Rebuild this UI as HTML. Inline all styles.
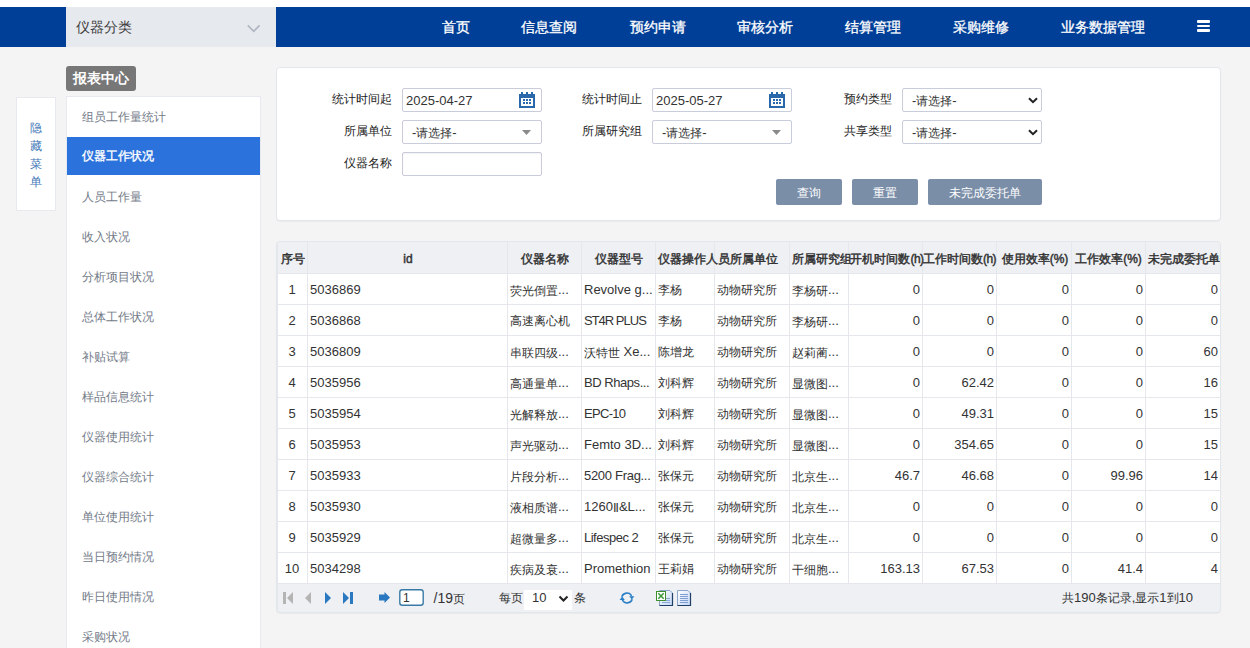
<!DOCTYPE html>
<html><head><meta charset="utf-8">
<style>
*{box-sizing:border-box;margin:0;padding:0}
html,body{width:1250px;height:648px;overflow:hidden}
body{background:#f4f4f4;font-family:"Liberation Sans",sans-serif;font-size:12px;color:#333;position:relative}
.abs{position:absolute}
#topw{left:0;top:0;width:1250px;height:7px;background:#fff}
#nav{left:0;top:7px;width:1250px;height:40px;background:#003f98}
#cat{left:66px;top:7px;width:210px;height:40px;background:#e6e9ee;color:#3c3c3c;font-size:14px;line-height:40px;padding-left:10px}
#cat .chev{position:absolute;left:181px;top:15px;width:14px;height:12px}
.navi{position:absolute;top:7px;height:40px;line-height:40px;color:#fff;font-size:14px;white-space:nowrap;-webkit-text-stroke:0.3px #fff}
#hamb{left:1197px;top:20px;width:13px;height:12px}
#hamb i{position:absolute;left:0;width:13px;background:#fff;border-radius:1px}
#badge{left:66px;top:66px;width:70px;height:25px;background:#777;border-radius:3px;color:#fff;font-weight:bold;font-size:14px;line-height:25px;padding-left:7px}
#hide{left:16px;top:97px;width:40px;height:114px;background:#fff;border:1px solid #e6e9ee;color:#4277b8;font-size:12px;text-align:center;padding-top:21px;padding-right:1px;line-height:18px}
#menu{left:66px;top:96px;width:195px;height:560px;background:#fff;border:1px solid #e6e9ef}
.mi{position:absolute;left:0;width:193px;height:40px;line-height:40px;padding-left:14.7px;color:#737b88;font-size:12px}
.mi.act{background:#2b72dc;color:#fff;height:38px;line-height:38px;-webkit-text-stroke:0.35px #fff}
.panel{background:#fff;border:1px solid #e2e7ec;border-radius:4px}
#form{left:276px;top:67px;width:945px;height:154px;box-shadow:0 1px 1px rgba(0,0,0,.04)}
.lbl{position:absolute;font-size:12px;color:#222;text-align:right;width:80px;line-height:23px}
.inp{position:absolute;width:140px;height:24px;border:1px solid #c9ccda;border-radius:2px;background:#fff;font-size:13px;line-height:24px;padding-left:3px;color:#333}
.sel{font-size:12px}
.btn{position:absolute;top:179px;height:26px;background:#7b8ea8;border-radius:2px;color:#fff;font-size:12px;line-height:28px;text-align:center}
#tbl{left:276px;top:241px;width:945px;height:372px;box-shadow:0 1px 1px rgba(0,0,0,.04);overflow:hidden;border-radius:4px;border:1px solid #e2e7ec;background:#eef0f3}
.th{position:absolute;top:0;height:31px;line-height:35px;font-weight:normal;-webkit-text-stroke:0.45px #333;font-size:12px;color:#333;white-space:nowrap}
.td{position:absolute;height:30px;line-height:33px;font-size:12px;color:#333;white-space:nowrap}
.n{font-size:13px}
.hp{letter-spacing:-0.5px}
.nl{position:relative;top:-1px}
.td.nn{line-height:31px}
.pp{letter-spacing:0}
.pt{position:absolute;height:29px;line-height:28px;font-size:12px;color:#333;white-space:nowrap}
</style></head><body>
<div class="abs" id="topw"></div>
<div class="abs" id="nav"></div>
<div class="abs" id="cat">仪器分类<svg class="chev" width="14" height="12" viewBox="0 0 14 12"><path d="M0.8 3.4L6.7 9.3L12.6 3.4" fill="none" stroke="#b1b8c3" stroke-width="1.7"/></svg></div>
<div class="navi" style="left:441.6px">首页</div>
<div class="navi" style="left:521px">信息查阅</div>
<div class="navi" style="left:630px">预约申请</div>
<div class="navi" style="left:737.3px">审核分析</div>
<div class="navi" style="left:845px">结算管理</div>
<div class="navi" style="left:952.6px">采购维修</div>
<div class="navi" style="left:1061.3px">业务数据管理</div>
<div class="abs" id="hamb"><i style="top:0;height:3px"></i><i style="top:5px;height:2px"></i><i style="top:9px;height:3px"></i></div>

<div class="abs" id="badge">报表中心</div>
<div class="abs" id="hide">隐<br>藏<br>菜<br>单</div>
<div class="abs" id="menu">
<div class="mi" style="top:0">组员工作量统计</div>
<div class="mi act" style="top:40px">仪器工作状况</div>
<div class="mi" style="top:80px">人员工作量</div>
<div class="mi" style="top:120px">收入状况</div>
<div class="mi" style="top:160px">分析项目状况</div>
<div class="mi" style="top:200px">总体工作状况</div>
<div class="mi" style="top:240px">补贴试算</div>
<div class="mi" style="top:280px">样品信息统计</div>
<div class="mi" style="top:320px">仪器使用统计</div>
<div class="mi" style="top:360px">仪器综合统计</div>
<div class="mi" style="top:400px">单位使用统计</div>
<div class="mi" style="top:440px">当日预约情况</div>
<div class="mi" style="top:480px">昨日使用情况</div>
<div class="mi" style="top:520px">采购状况</div>
</div>

<div class="abs panel" id="form"></div>
<div class="lbl" style="left:312px;top:88px">统计时间起</div>
<div class="inp" style="left:402px;top:88px">2025-04-27<svg class="cal" style="position:absolute;left:116px;top:3px" width="16" height="16" viewBox="0 0 16 16"><g fill="#2a68ac"><rect x="0" y="2" width="16" height="14"/><rect x="2" y="0" width="2" height="3"/><rect x="12" y="0" width="2" height="3"/><rect x="7" y="0" width="2" height="3"/></g><rect x="2" y="6" width="12" height="8" fill="#fff"/><g fill="#2a68ac"><rect x="4" y="7" width="2" height="2"/><rect x="7" y="7" width="2" height="2"/><rect x="10" y="7" width="2" height="2"/><rect x="4" y="10" width="2" height="2"/><rect x="7" y="10" width="2" height="2"/><rect x="10" y="10" width="2" height="2"/></g></svg></div>
<div class="lbl" style="left:312px;top:120px">所属单位</div>
<div class="inp sel" style="left:402px;top:120px;padding-left:9px"><span class="n">-</span>请选择<span class="n">-</span><svg style="position:absolute;left:119px;top:9px" width="9" height="5" viewBox="0 0 9 5"><path d="M0 0H9L4.5 5Z" fill="#8a8a8a"/></svg></div>
<div class="lbl" style="left:312px;top:152px">仪器名称</div>
<div class="inp" style="left:402px;top:152px;box-shadow:inset 0 1px 2px rgba(0,0,0,.06)"></div>

<div class="lbl" style="left:562px;top:88px">统计时间止</div>
<div class="inp" style="left:652px;top:88px">2025-05-27<svg class="cal" style="position:absolute;left:116px;top:3px" width="16" height="16" viewBox="0 0 16 16"><g fill="#2a68ac"><rect x="0" y="2" width="16" height="14"/><rect x="2" y="0" width="2" height="3"/><rect x="12" y="0" width="2" height="3"/><rect x="7" y="0" width="2" height="3"/></g><rect x="2" y="6" width="12" height="8" fill="#fff"/><g fill="#2a68ac"><rect x="4" y="7" width="2" height="2"/><rect x="7" y="7" width="2" height="2"/><rect x="10" y="7" width="2" height="2"/><rect x="4" y="10" width="2" height="2"/><rect x="7" y="10" width="2" height="2"/><rect x="10" y="10" width="2" height="2"/></g></svg></div>
<div class="lbl" style="left:562px;top:120px">所属研究组</div>
<div class="inp sel" style="left:652px;top:120px;padding-left:9px"><span class="n">-</span>请选择<span class="n">-</span><svg style="position:absolute;left:119px;top:9px" width="9" height="5" viewBox="0 0 9 5"><path d="M0 0H9L4.5 5Z" fill="#8a8a8a"/></svg></div>

<div class="lbl" style="left:812px;top:88px">预约类型</div>
<div class="inp sel" style="left:902px;top:88px;padding-left:9px"><span class="n">-</span>请选择<span class="n">-</span><svg style="position:absolute;left:125px;top:8px" width="10" height="7" viewBox="0 0 10 7"><path d="M1 1.2L5 5.2L9 1.2" fill="none" stroke="#222" stroke-width="2"/></svg></div>
<div class="lbl" style="left:812px;top:120px">共享类型</div>
<div class="inp sel" style="left:902px;top:120px;padding-left:9px"><span class="n">-</span>请选择<span class="n">-</span><svg style="position:absolute;left:125px;top:8px" width="10" height="7" viewBox="0 0 10 7"><path d="M1 1.2L5 5.2L9 1.2" fill="none" stroke="#222" stroke-width="2"/></svg></div>

<div class="btn" style="left:776px;width:66px">查询</div>
<div class="btn" style="left:852px;width:66px">重置</div>
<div class="btn" style="left:928px;width:114px">未完成委托单</div>


<div class="abs" id="tbl">
<div class="abs" style="left:0;top:0;width:944px;height:31px;background:#eef0f4"></div>
<div class="abs" style="left:0;top:32px;width:944px;height:310px;background:#fff"></div>
<div class="abs" style="left:0;top:31px;width:944px;height:1px;background:#e4e7ec"></div>
<div class="abs" style="left:0;top:0;width:1px;height:371px;background:#e4e7ec"></div>
<div class="abs" style="left:0;top:62px;width:944px;height:1px;background:#e4e7ec"></div>
<div class="abs" style="left:0;top:93px;width:944px;height:1px;background:#e4e7ec"></div>
<div class="abs" style="left:0;top:124px;width:944px;height:1px;background:#e4e7ec"></div>
<div class="abs" style="left:0;top:155px;width:944px;height:1px;background:#e4e7ec"></div>
<div class="abs" style="left:0;top:186px;width:944px;height:1px;background:#e4e7ec"></div>
<div class="abs" style="left:0;top:217px;width:944px;height:1px;background:#e4e7ec"></div>
<div class="abs" style="left:0;top:248px;width:944px;height:1px;background:#e4e7ec"></div>
<div class="abs" style="left:0;top:279px;width:944px;height:1px;background:#e4e7ec"></div>
<div class="abs" style="left:0;top:310px;width:944px;height:1px;background:#e4e7ec"></div>
<div class="abs" style="left:0;top:341px;width:944px;height:1px;background:#e4e7ec"></div>
<div class="abs" style="left:30px;top:0;width:1px;height:342px;background:#e4e7ec"></div>
<div class="abs" style="left:230px;top:0;width:1px;height:342px;background:#e4e7ec"></div>
<div class="abs" style="left:304px;top:0;width:1px;height:342px;background:#e4e7ec"></div>
<div class="abs" style="left:378px;top:0;width:1px;height:342px;background:#e4e7ec"></div>
<div class="abs" style="left:437px;top:0;width:1px;height:342px;background:#e4e7ec"></div>
<div class="abs" style="left:512px;top:0;width:1px;height:342px;background:#e4e7ec"></div>
<div class="abs" style="left:571px;top:0;width:1px;height:342px;background:#e4e7ec"></div>
<div class="abs" style="left:645px;top:0;width:1px;height:342px;background:#e4e7ec"></div>
<div class="abs" style="left:719px;top:0;width:1px;height:342px;background:#e4e7ec"></div>
<div class="abs" style="left:794px;top:0;width:1px;height:342px;background:#e4e7ec"></div>
<div class="abs" style="left:868px;top:0;width:1px;height:342px;background:#e4e7ec"></div>
<div class="th" style="left:4px">序号</div>
<div class="th" style="left:31px;width:200px;text-align:center">id</div>
<div class="th" style="left:168px;width:200px;text-align:center">仪器名称</div>
<div class="th" style="left:242px;width:200px;text-align:center">仪器型号</div>
<div class="th" style="left:381px">仪器操作人员所属单位</div>
<div class="th" style="left:515px">所属研究组</div>
<div class="th" style="left:510px;width:200px;text-align:center">开机时间数<span class="hp">(h)</span></div>
<div class="th" style="left:582.5px;width:200px;text-align:center">工作时间数<span class="hp">(h)</span></div>
<div class="th" style="left:658px;width:200px;text-align:center">使用效率<span class="pp">(%)</span></div>
<div class="th" style="left:731.5px;width:200px;text-align:center">工作效率<span class="pp">(%)</span></div>
<div class="th" style="left:871px">未完成委托单数</div>
<div class="td n nn" style="left:0px;top:32px;width:30px;text-align:center">1</div>
<div class="td" style="left:33px;top:32px"><span class="n nl">5036869</span></div>
<div class="td" style="left:233px;top:32px">荧光倒置<span class="n nl">...</span></div>
<div class="td" style="left:307px;top:32px"><span class="n nl">Revolve g...</span></div>
<div class="td" style="left:381px;top:32px">李杨</div>
<div class="td" style="left:440px;top:32px">动物研究所</div>
<div class="td" style="left:515px;top:32px">李杨研<span class="n nl">...</span></div>
<div class="td n nn" style="left:571px;top:32px;width:72px;text-align:right">0</div>
<div class="td n nn" style="left:645px;top:32px;width:72px;text-align:right">0</div>
<div class="td n nn" style="left:719px;top:32px;width:73px;text-align:right">0</div>
<div class="td n nn" style="left:794px;top:32px;width:72px;text-align:right">0</div>
<div class="td n nn" style="left:868px;top:32px;width:73px;text-align:right">0</div>
<div class="td n nn" style="left:0px;top:63px;width:30px;text-align:center">2</div>
<div class="td" style="left:33px;top:63px"><span class="n nl">5036868</span></div>
<div class="td" style="left:233px;top:63px">高速离心机</div>
<div class="td" style="left:307px;top:63px;letter-spacing:-1px"><span class="n nl">ST4R PLUS</span></div>
<div class="td" style="left:381px;top:63px">李杨</div>
<div class="td" style="left:440px;top:63px">动物研究所</div>
<div class="td" style="left:515px;top:63px">李杨研<span class="n nl">...</span></div>
<div class="td n nn" style="left:571px;top:63px;width:72px;text-align:right">0</div>
<div class="td n nn" style="left:645px;top:63px;width:72px;text-align:right">0</div>
<div class="td n nn" style="left:719px;top:63px;width:73px;text-align:right">0</div>
<div class="td n nn" style="left:794px;top:63px;width:72px;text-align:right">0</div>
<div class="td n nn" style="left:868px;top:63px;width:73px;text-align:right">0</div>
<div class="td n nn" style="left:0px;top:94px;width:30px;text-align:center">3</div>
<div class="td" style="left:33px;top:94px"><span class="n nl">5036809</span></div>
<div class="td" style="left:233px;top:94px">串联四级<span class="n nl">...</span></div>
<div class="td" style="left:307px;top:94px">沃特世<span class="n nl"> Xe...</span></div>
<div class="td" style="left:381px;top:94px">陈增龙</div>
<div class="td" style="left:440px;top:94px">动物研究所</div>
<div class="td" style="left:515px;top:94px">赵莉蔺<span class="n nl">...</span></div>
<div class="td n nn" style="left:571px;top:94px;width:72px;text-align:right">0</div>
<div class="td n nn" style="left:645px;top:94px;width:72px;text-align:right">0</div>
<div class="td n nn" style="left:719px;top:94px;width:73px;text-align:right">0</div>
<div class="td n nn" style="left:794px;top:94px;width:72px;text-align:right">0</div>
<div class="td n nn" style="left:868px;top:94px;width:73px;text-align:right">60</div>
<div class="td n nn" style="left:0px;top:125px;width:30px;text-align:center">4</div>
<div class="td" style="left:33px;top:125px"><span class="n nl">5035956</span></div>
<div class="td" style="left:233px;top:125px">高通量单<span class="n nl">...</span></div>
<div class="td" style="left:307px;top:125px;letter-spacing:-0.45px"><span class="n nl">BD Rhaps...</span></div>
<div class="td" style="left:381px;top:125px">刘科辉</div>
<div class="td" style="left:440px;top:125px">动物研究所</div>
<div class="td" style="left:515px;top:125px">显微图<span class="n nl">...</span></div>
<div class="td n nn" style="left:571px;top:125px;width:72px;text-align:right">0</div>
<div class="td n nn" style="left:645px;top:125px;width:72px;text-align:right">62.42</div>
<div class="td n nn" style="left:719px;top:125px;width:73px;text-align:right">0</div>
<div class="td n nn" style="left:794px;top:125px;width:72px;text-align:right">0</div>
<div class="td n nn" style="left:868px;top:125px;width:73px;text-align:right">16</div>
<div class="td n nn" style="left:0px;top:156px;width:30px;text-align:center">5</div>
<div class="td" style="left:33px;top:156px"><span class="n nl">5035954</span></div>
<div class="td" style="left:233px;top:156px">光解释放<span class="n nl">...</span></div>
<div class="td" style="left:307px;top:156px;letter-spacing:-0.7px"><span class="n nl">EPC-10</span></div>
<div class="td" style="left:381px;top:156px">刘科辉</div>
<div class="td" style="left:440px;top:156px">动物研究所</div>
<div class="td" style="left:515px;top:156px">显微图<span class="n nl">...</span></div>
<div class="td n nn" style="left:571px;top:156px;width:72px;text-align:right">0</div>
<div class="td n nn" style="left:645px;top:156px;width:72px;text-align:right">49.31</div>
<div class="td n nn" style="left:719px;top:156px;width:73px;text-align:right">0</div>
<div class="td n nn" style="left:794px;top:156px;width:72px;text-align:right">0</div>
<div class="td n nn" style="left:868px;top:156px;width:73px;text-align:right">15</div>
<div class="td n nn" style="left:0px;top:187px;width:30px;text-align:center">6</div>
<div class="td" style="left:33px;top:187px"><span class="n nl">5035953</span></div>
<div class="td" style="left:233px;top:187px">声光驱动<span class="n nl">...</span></div>
<div class="td" style="left:307px;top:187px"><span class="n nl">Femto 3D...</span></div>
<div class="td" style="left:381px;top:187px">刘科辉</div>
<div class="td" style="left:440px;top:187px">动物研究所</div>
<div class="td" style="left:515px;top:187px">显微图<span class="n nl">...</span></div>
<div class="td n nn" style="left:571px;top:187px;width:72px;text-align:right">0</div>
<div class="td n nn" style="left:645px;top:187px;width:72px;text-align:right">354.65</div>
<div class="td n nn" style="left:719px;top:187px;width:73px;text-align:right">0</div>
<div class="td n nn" style="left:794px;top:187px;width:72px;text-align:right">0</div>
<div class="td n nn" style="left:868px;top:187px;width:73px;text-align:right">15</div>
<div class="td n nn" style="left:0px;top:218px;width:30px;text-align:center">7</div>
<div class="td" style="left:33px;top:218px"><span class="n nl">5035933</span></div>
<div class="td" style="left:233px;top:218px">片段分析<span class="n nl">...</span></div>
<div class="td" style="left:307px;top:218px;letter-spacing:-0.3px"><span class="n nl">5200 Frag...</span></div>
<div class="td" style="left:381px;top:218px">张保元</div>
<div class="td" style="left:440px;top:218px">动物研究所</div>
<div class="td" style="left:515px;top:218px">北京生<span class="n nl">...</span></div>
<div class="td n nn" style="left:571px;top:218px;width:72px;text-align:right">46.7</div>
<div class="td n nn" style="left:645px;top:218px;width:72px;text-align:right">46.68</div>
<div class="td n nn" style="left:719px;top:218px;width:73px;text-align:right">0</div>
<div class="td n nn" style="left:794px;top:218px;width:72px;text-align:right">99.96</div>
<div class="td n nn" style="left:868px;top:218px;width:73px;text-align:right">14</div>
<div class="td n nn" style="left:0px;top:249px;width:30px;text-align:center">8</div>
<div class="td" style="left:33px;top:249px"><span class="n nl">5035930</span></div>
<div class="td" style="left:233px;top:249px">液相质谱<span class="n nl">...</span></div>
<div class="td" style="left:307px;top:249px"><span class="n nl">1260</span>Ⅱ<span class="n nl">&amp;L...</span></div>
<div class="td" style="left:381px;top:249px">张保元</div>
<div class="td" style="left:440px;top:249px">动物研究所</div>
<div class="td" style="left:515px;top:249px">北京生<span class="n nl">...</span></div>
<div class="td n nn" style="left:571px;top:249px;width:72px;text-align:right">0</div>
<div class="td n nn" style="left:645px;top:249px;width:72px;text-align:right">0</div>
<div class="td n nn" style="left:719px;top:249px;width:73px;text-align:right">0</div>
<div class="td n nn" style="left:794px;top:249px;width:72px;text-align:right">0</div>
<div class="td n nn" style="left:868px;top:249px;width:73px;text-align:right">0</div>
<div class="td n nn" style="left:0px;top:280px;width:30px;text-align:center">9</div>
<div class="td" style="left:33px;top:280px"><span class="n nl">5035929</span></div>
<div class="td" style="left:233px;top:280px">超微量多<span class="n nl">...</span></div>
<div class="td" style="left:307px;top:280px;letter-spacing:-0.5px"><span class="n nl">Lifespec 2</span></div>
<div class="td" style="left:381px;top:280px">张保元</div>
<div class="td" style="left:440px;top:280px">动物研究所</div>
<div class="td" style="left:515px;top:280px">北京生<span class="n nl">...</span></div>
<div class="td n nn" style="left:571px;top:280px;width:72px;text-align:right">0</div>
<div class="td n nn" style="left:645px;top:280px;width:72px;text-align:right">0</div>
<div class="td n nn" style="left:719px;top:280px;width:73px;text-align:right">0</div>
<div class="td n nn" style="left:794px;top:280px;width:72px;text-align:right">0</div>
<div class="td n nn" style="left:868px;top:280px;width:73px;text-align:right">0</div>
<div class="td n nn" style="left:0px;top:311px;width:30px;text-align:center">10</div>
<div class="td" style="left:33px;top:311px"><span class="n nl">5034298</span></div>
<div class="td" style="left:233px;top:311px">疾病及衰<span class="n nl">...</span></div>
<div class="td" style="left:307px;top:311px"><span class="n nl">Promethion</span></div>
<div class="td" style="left:381px;top:311px">王莉娟</div>
<div class="td" style="left:440px;top:311px">动物研究所</div>
<div class="td" style="left:515px;top:311px">干细胞<span class="n nl">...</span></div>
<div class="td n nn" style="left:571px;top:311px;width:72px;text-align:right">163.13</div>
<div class="td n nn" style="left:645px;top:311px;width:72px;text-align:right">67.53</div>
<div class="td n nn" style="left:719px;top:311px;width:73px;text-align:right">0</div>
<div class="td n nn" style="left:794px;top:311px;width:72px;text-align:right">41.4</div>
<div class="td n nn" style="left:868px;top:311px;width:73px;text-align:right">4</div>
<svg class="abs" style="left:0;top:342px" width="944" height="29" viewBox="277 584 944 29">
<g fill="#b4b4b4"><rect x="283" y="592" width="3" height="12"/><path d="M287 598L293 592V604Z"/><path d="M305 598L311 592V604Z"/></g>
<g fill="#2a78c0"><path d="M331 598L325 592V604Z"/><path d="M349 598L343 592V604Z"/><rect x="350" y="592" width="3" height="12"/>
<path d="M379 594.5H384.5V592L390 597.5L384.5 603V600.5H379Z"/></g>
<rect x="399.8" y="589.8" width="23.4" height="15.4" rx="2.5" fill="#fff" stroke="#3a7aa6" stroke-width="1.4"/>
<rect x="524" y="590" width="48" height="20" fill="#fff"/>
<path d="M559.5 596.5L563.5 600.5L567.5 596.5" fill="none" stroke="#222" stroke-width="2"/>
<g fill="none" stroke="#2a7fc6" stroke-width="1.6"><path d="M621.8 596.8A5.3 5.3 0 0 1 631.6 596"/><path d="M632.2 599.2A5.3 5.3 0 0 1 622.4 600"/></g>
<g fill="#2a7fc6"><path d="M629.2 596.2H634.4L631.8 599.4Z"/><path d="M619.6 600H624.8L622.2 596.6Z"/></g>
<defs><linearGradient id="dg" x1="0" y1="0" x2="1" y2="1"><stop offset="0" stop-color="#ffffff"/><stop offset="1" stop-color="#c3d6f5"/></linearGradient></defs>
<g><path d="M659.5 605.5V590.5H670L672.5 593V605.5Z" fill="url(#dg)" stroke="#8ea6cc" stroke-width="1"/><path d="M659.5 605.5H672.5V593" fill="none" stroke="#1f3d66" stroke-width="1.2"/><g stroke="#8aa8d8" stroke-width="1"><line x1="662" y1="602.5" x2="670" y2="602.5"/><line x1="662" y1="600.5" x2="670" y2="600.5"/><line x1="666" y1="598.5" x2="670" y2="598.5"/></g>
<rect x="656.5" y="591.5" width="9" height="9" fill="#fff" stroke="#3f8f2f" stroke-width="1"/><path d="M658.3 593.3L663.7 598.7M663.7 593.3L658.3 598.7" stroke="#3a9a3a" stroke-width="1.6"/></g>
<g><path d="M677.5 605.5V590.5H688L690.5 593V605.5Z" fill="url(#dg)" stroke="#8ea6cc" stroke-width="1"/><path d="M677.5 605.5H690.5V593" fill="none" stroke="#1f3d66" stroke-width="1.2"/><g stroke="#7f9fd3" stroke-width="1"><line x1="680" y1="594.5" x2="688" y2="594.5"/><line x1="680" y1="596.5" x2="688" y2="596.5"/><line x1="680" y1="598.5" x2="688" y2="598.5"/><line x1="680" y1="600.5" x2="688" y2="600.5"/><line x1="680" y1="602.5" x2="688" y2="602.5"/></g></g>
</svg>
<div class="pt n" style="left:126px;top:342px">1</div>
<div class="pt" style="left:156.5px;top:342px"><span class="n" style="font-size:14px">/19</span>页</div>
<div class="pt" style="left:222px;top:342px">每页</div>
<div class="pt" style="left:255px;top:342px;font-size:13px">10</div>
<div class="pt" style="left:296.5px;top:342px">条</div>
<div class="pt" style="left:785px;top:342px">共<span class="n">190</span>条记录<span class="n">,</span>显示<span class="n">1</span>到<span class="n">10</span></div>

</div>
<!-- /TBL -->

</body></html>
